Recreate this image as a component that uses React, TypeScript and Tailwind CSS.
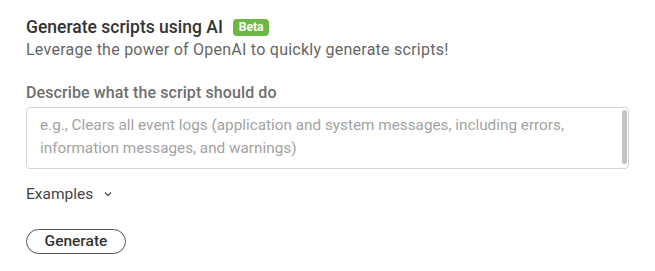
import React from "react";

export default function App() {
  return (
    <div
      className="w-[655px] h-[271px] bg-white pl-[26px] pr-[26px] pt-[15px]"
      style={{ fontFamily: "Roboto, 'Liberation Sans', sans-serif" }}
    >
      <div className="flex items-center gap-[10px]">
        <h1 className="text-[17.5px] leading-[25px] font-medium text-[#333333]">Generate scripts using AI</h1>
        <span className="rounded-[4px] bg-[#6bb944] px-[6px] text-[12px] leading-[17px] font-bold text-white">Beta</span>
      </div>
      <p className="text-[16px] leading-[20px] tracking-[0.25px] text-[#666666]">Leverage the power of OpenAI to quickly generate scripts!</p>

      <label className="mt-[22px] block text-[16px] leading-[22px] tracking-[0.1px] font-medium text-[#6f6f6f]">
        Describe what the script should do
      </label>
      <div className="relative mt-[3px] h-[62px] w-[603px] rounded-[4px] border border-[#d4d4d4] bg-white">
        <div className="px-[13px] pt-[6px] text-[15.3px] leading-[23px] text-[#a3a3a3]">
          e.g., Clears all event logs (application and system messages, including errors, information messages, and warnings)
        </div>
        <div className="absolute right-[1px] top-[2px] h-[54px] w-[5px] rounded-full bg-[#c4c4c4]" />
      </div>

      <div className="mt-[14px] flex items-center gap-[11px] text-[15.5px] leading-[22px] text-[#444444]">
        <span>Examples</span>
        <svg width="8" height="6" viewBox="0 0 8 6" fill="none">
          <path d="M1 1.5 L4 4.5 L7 1.5" stroke="#555" strokeWidth="1.3" />
        </svg>
      </div>

      <button className="mt-[24px] flex h-[25px] w-[100px] items-center justify-center rounded-full border border-[#555555] text-[15.5px] font-medium text-[#333333]">
        Generate
      </button>
    </div>
  );
}
